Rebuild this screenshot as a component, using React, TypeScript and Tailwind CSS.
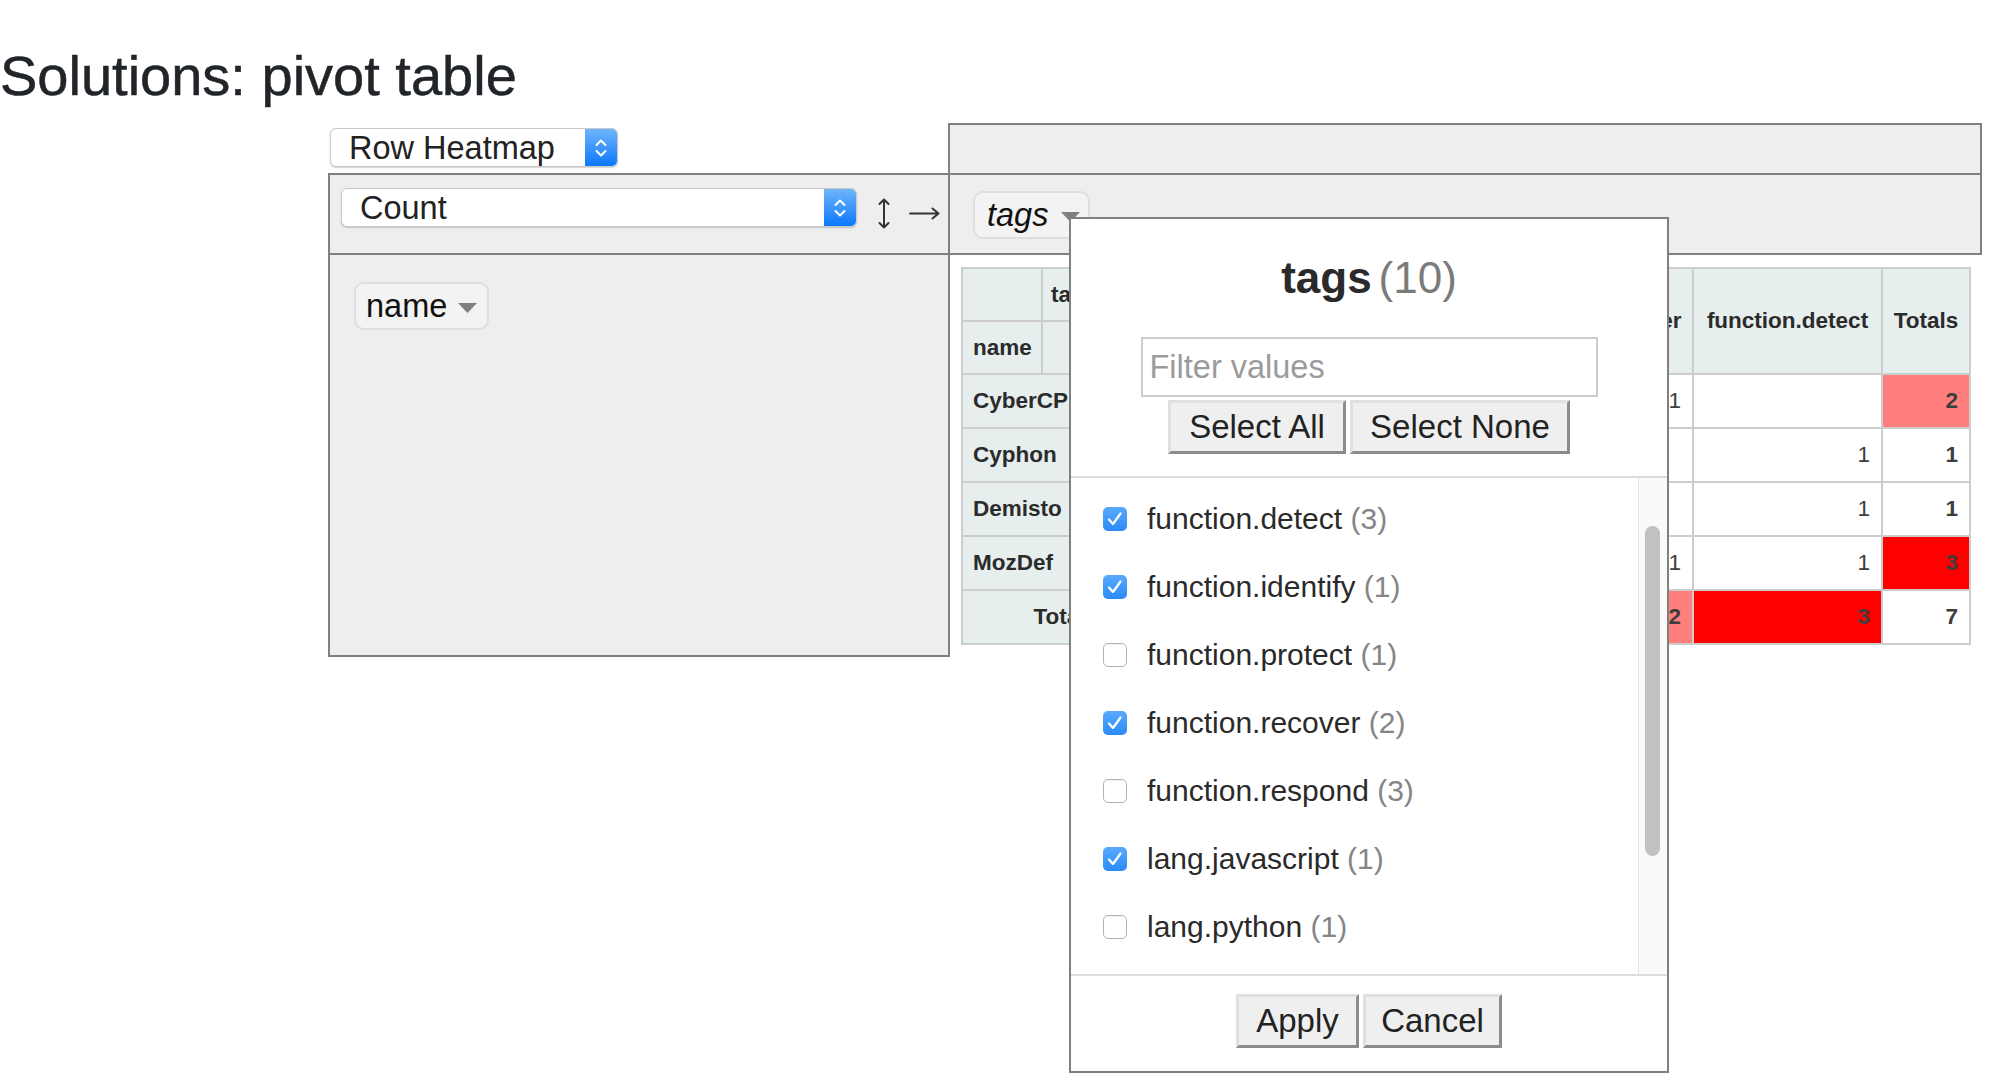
import React from "react";

const Stepper = () => (
  <svg width="14" height="24" viewBox="0 0 14 24" fill="none" stroke="white" strokeWidth="2" strokeLinecap="round" strokeLinejoin="round">
    <path d="M2.5 9 L7 4.5 L11.5 9" />
    <path d="M2.5 15 L7 19.5 L11.5 15" />
  </svg>
);

function MacSelect({ label, className }: { label: string; className: string }) {
  return (
    <div className={"flex h-[39px] rounded-[6px] bg-white border border-[#c9c9c9] shadow-[0_1px_1.5px_rgba(0,0,0,0.18)] overflow-hidden " + className}>
      <div className="flex-1 pl-[18px] pt-[2px] text-[32.5px] leading-[35px] text-[#222] whitespace-nowrap">{label}</div>
      <div className="w-[32px] flex items-center justify-center bg-[linear-gradient(#70b5fb,#0b78fd)]">
        <Stepper />
      </div>
    </div>
  );
}

const Tri = () => (
  <svg width="19" height="10" viewBox="0 0 19 10" className="shrink-0">
    <path d="M0 0 H19 L9.5 10 Z" fill="#808080" />
  </svg>
);

const cols = ["function.identify", "lang.javascript", "function.recover", "function.detect"];

type Row = { name: string; vals: (number | "")[]; total: number; totalBg: string };
const rows: Row[] = [
  { name: "CyberCPR", vals: [1, "", 1, ""], total: 2, totalBg: "bg-[#ff7f7f]" },
  { name: "Cyphon", vals: ["", "", "", 1], total: 1, totalBg: "bg-white" },
  { name: "Demisto", vals: ["", "", "", 1], total: 1, totalBg: "bg-white" },
  { name: "MozDef", vals: ["", 1, 1, 1], total: 3, totalBg: "bg-[#ff0000]" },
];
const colTotals: { v: number; bg: string }[] = [
  { v: 1, bg: "bg-white" },
  { v: 1, bg: "bg-white" },
  { v: 2, bg: "bg-[#ff7f7f]" },
  { v: 3, bg: "bg-[#ff0000]" },
];

const items: { label: string; count: number; checked: boolean }[] = [
  { label: "function.detect", count: 3, checked: true },
  { label: "function.identify", count: 1, checked: true },
  { label: "function.protect", count: 1, checked: false },
  { label: "function.recover", count: 2, checked: true },
  { label: "function.respond", count: 3, checked: false },
  { label: "lang.javascript", count: 1, checked: true },
  { label: "lang.python", count: 1, checked: false },
];

const TH = "bg-[#e6eeee] font-bold text-[#2b2b2b] text-[22.5px] flex items-center whitespace-nowrap overflow-hidden";
const TD = "text-[#3d3d3d] text-[22.5px] flex items-center justify-end pr-[11px] whitespace-nowrap";

function Checkbox({ checked }: { checked: boolean }) {
  if (checked) {
    return (
      <div className="w-[24px] h-[24px] rounded-[5px] bg-[linear-gradient(#5aa9fc,#2b8af8)] flex items-center justify-center shrink-0">
        <svg width="24" height="24" viewBox="0 0 24 24" fill="none" stroke="white" strokeWidth="2.2" strokeLinecap="round" strokeLinejoin="round">
          <path d="M6 12.5 L10 17 L17.5 6.5" />
        </svg>
      </div>
    );
  }
  return <div className="w-[24px] h-[24px] rounded-[5px] bg-white border-[1.5px] border-[#b3b3b3] shadow-[inset_0_1px_1px_rgba(0,0,0,0.06)] shrink-0" />;
}

export default function App() {
  return (
    <div className="relative w-[2008px] h-[1092px] overflow-hidden bg-white font-['Liberation_Sans',Arial,sans-serif] text-[#222]">
      <h1 className="m-0 pt-[42px] text-[56px] leading-[67px] font-normal text-[#212529] whitespace-nowrap [-webkit-text-stroke:0.5px_#212529]">Solutions: pivot table</h1>

      <div className="ml-[328px] mt-[14px] flex flex-col w-[1654px]">
        {/* row 1 */}
        <div className="flex h-[50px]">
          <div className="w-[620px] pl-[2px] pt-[5px]">
            <MacSelect label="Row Heatmap" className="w-[288px]" />
          </div>
          <div className="w-[1034px] border-t-2 border-x-2 border-[#808080] bg-[#eeeeee]" />
        </div>

        {/* row 2 */}
        <div className="flex h-[80px]">
          <div className="w-[620px] border-t-2 border-l-2 border-[#808080] bg-[#eeeeee] flex items-start pl-[11px] pt-[13px]">
            <MacSelect label="Count" className="w-[516px]" />
            <svg width="14" height="31" viewBox="0 0 14 31" className="ml-[20px] mt-[10px] shrink-0" fill="none" stroke="#333" strokeWidth="2" strokeLinecap="round" strokeLinejoin="round">
              <path d="M7 1.5 V29.5 M2.5 6 L7 1.5 L11.5 6 M2.5 25 L7 29.5 L11.5 25" />
            </svg>
            <svg width="31" height="13" viewBox="0 0 31 13" className="ml-[18px] mt-[19px] shrink-0" fill="none" stroke="#333" strokeWidth="2" strokeLinecap="round" strokeLinejoin="round">
              <path d="M1 6.5 H29.5 M23.5 1.5 L29.5 6.5 L23.5 11.5" />
            </svg>
          </div>
          <div className="w-[1034px] border-t-2 border-x-2 border-[#808080] bg-[#eeeeee] pl-[23px] pt-[16px]">
            <div className="inline-flex items-center h-[48px] pl-[12px] pr-[8px] bg-[#f3f3f3] border-2 border-[#dedede] rounded-[10px]">
              <span className="italic text-[32.5px] leading-[37px] text-[#111]">tags</span>
              <span className="ml-[13px] mt-[4px]"><Tri /></span>
            </div>
          </div>
        </div>

        {/* row 3 */}
        <div className="flex h-[404px]">
          <div className="w-[622px] border-2 border-[#808080] bg-[#eeeeee] pl-[24px] pt-[27px]">
            <div className="inline-flex items-center h-[48px] pl-[10px] pr-[10px] bg-[#f3f3f3] border-2 border-[#dedede] rounded-[10px]">
              <span className="text-[32.5px] leading-[37px] text-[#111]">name</span>
              <span className="ml-[11px] mt-[4px]"><Tri /></span>
            </div>
          </div>
          <div className="w-[1032px] border-t-2 border-[#808080] bg-white pl-[11px] pt-[12px]">
            <div className="grid w-max grid-cols-[78px_65px_195px_186px_197px_187px_86px] grid-rows-[51px_51px_52px_52px_52px_52px_52px] gap-[2px] p-[2px] bg-[#cdcdcd]">
              <div className={TH} />
              <div className={TH + " pl-[8px]"}>tags</div>
              {cols.map((c) => (
                <div key={c} className={TH + " row-span-2 justify-center"}>{c}</div>
              ))}
              <div className={TH + " row-span-2 justify-center"}>Totals</div>
              <div className={TH + " pl-[10px]"}>name</div>
              <div className={TH} />
              {rows.map((r) => (
                <React.Fragment key={r.name}>
                  <div className={TH + " col-span-2 pl-[10px]"}>{r.name}</div>
                  {r.vals.map((v, i) => (
                    <div key={i} className={TD + " bg-white"}>{v}</div>
                  ))}
                  <div className={TD + " font-bold " + r.totalBg}>{r.total}</div>
                </React.Fragment>
              ))}
              <div className={TH + " col-span-2 justify-end pr-[10px]"}>Totals</div>
              {colTotals.map((t, i) => (
                <div key={i} className={TD + " font-bold " + t.bg}>{t.v}</div>
              ))}
              <div className={TD + " font-bold bg-white"}>7</div>
            </div>
          </div>
        </div>
      </div>

      {/* filter popup */}
      <div className="absolute left-[1069px] top-[217px] w-[600px] h-[856px] border-2 border-[#808080] bg-white flex flex-col">
        <div className="h-[257px] flex flex-col items-center pt-[34px] shrink-0">
          <div className="h-[50px] text-[44px] leading-[50px] whitespace-nowrap">
            <span className="font-bold text-[#2a2a2a]">tags</span>
            <span className="text-[25px]"> </span>
            <span className="text-[#7b7b7b]">(10)</span>
          </div>
          <input
            type="text"
            placeholder="Filter values"
            readOnly
            className="mt-[34px] w-[457px] h-[60px] border-2 border-[#cccccc] bg-white pl-[7px] text-[32.5px] text-[#222] placeholder:text-[#9b9b9b] outline-none"
          />
          <div className="mt-[3px] flex gap-[4px]">
            <button className="w-[178px] h-[54px] bg-[#efefef] border-[3px] border-t-[#e0e0e0] border-l-[#e0e0e0] border-r-[#8c8c8c] border-b-[#8c8c8c] text-[33px] leading-[40px] text-[#222]">Select All</button>
            <button className="w-[220px] h-[54px] bg-[#efefef] border-[3px] border-t-[#e0e0e0] border-l-[#e0e0e0] border-r-[#8c8c8c] border-b-[#8c8c8c] text-[33px] leading-[40px] text-[#222]">Select None</button>
          </div>
        </div>

        <div className="relative h-[500px] border-y-2 border-[#dddddd] overflow-hidden shrink-0">
          <div className="pt-[7px]">
            {items.map((it) => (
              <div key={it.label} className="h-[68px] flex items-center pl-[32px]">
                <Checkbox checked={it.checked} />
                <span className="ml-[20px] text-[30px] leading-[36px] whitespace-nowrap">
                  <span className="text-[#2a2a2a]">{it.label}</span>
                  <span className="text-[#858585]"> ({it.count})</span>
                </span>
              </div>
            ))}
          </div>
          <div className="absolute right-0 top-0 bottom-0 w-[29px] bg-[#fafafa] border-l border-[#e6e6e6]">
            <div className="absolute left-[6px] top-[48px] w-[15px] h-[330px] rounded-full bg-[#c1c1c1]" />
          </div>
        </div>

        <div className="flex-1 flex justify-center items-start pt-[18px] gap-[4px]">
          <button className="w-[123px] h-[54px] bg-[#efefef] border-[3px] border-t-[#e0e0e0] border-l-[#e0e0e0] border-r-[#8c8c8c] border-b-[#8c8c8c] text-[33px] leading-[40px] text-[#222]">Apply</button>
          <button className="w-[139px] h-[54px] bg-[#efefef] border-[3px] border-t-[#e0e0e0] border-l-[#e0e0e0] border-r-[#8c8c8c] border-b-[#8c8c8c] text-[33px] leading-[40px] text-[#222]">Cancel</button>
        </div>
      </div>
    </div>
  );
}
